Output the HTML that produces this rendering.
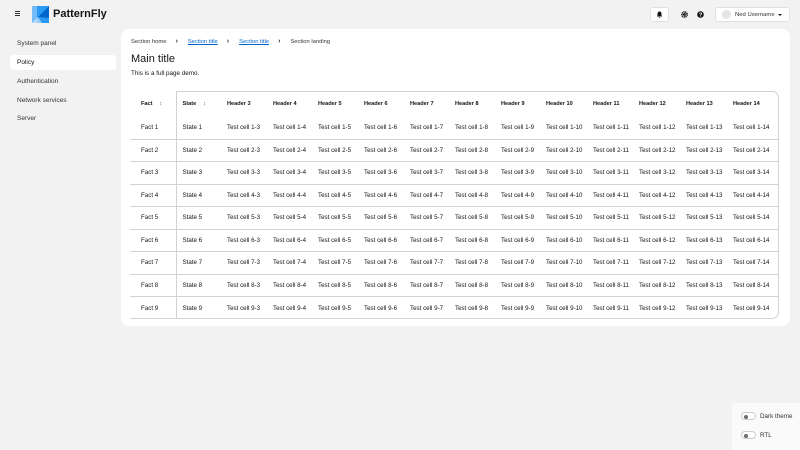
<!DOCTYPE html>
<html><head><meta charset="utf-8"><style>
*{box-sizing:border-box;margin:0;padding:0}
body{width:800px;height:450px;background:#f2f2f2;font-family:"Liberation Sans",sans-serif;color:#151515;position:relative;overflow:hidden;font-size:6.5px}
.abs{position:absolute}
.nav{position:absolute;left:17px;font-size:6.5px;color:#333}
.main{position:absolute;left:121px;top:29px;width:669px;height:297px;background:#fff;border-radius:8px}
.tw{position:absolute;left:130px;top:91px;width:649px;height:228px;border-top:1px solid #d2d2d2;border-right:1px solid #d2d2d2;border-bottom:1px solid #d2d2d2;border-radius:0 7px 7px 0;overflow:hidden}
table{border-collapse:collapse;table-layout:fixed;width:648px;position:absolute;left:0;top:0}
td,th{padding-left:6px;text-align:left;white-space:nowrap;font-size:6.2px;font-weight:normal;color:#151515}
th{height:24.5px;font-weight:bold;font-size:5.6px}
td{height:22.5px;border-bottom:1px solid #d2d2d2}
tr:last-child td{border-bottom:none}
td:first-child,th:first-child{padding-left:11px;border-right:1px solid #d2d2d2}
.s{color:#555;margin-left:7px;font-weight:normal}
.cover{position:absolute;left:130px;top:90px;width:46px;height:2px;background:#fff}
.tog{position:absolute;left:741px;width:15px;height:8px;border:1px solid #ccc;border-radius:5px;background:#fff}
.tog:after{content:"";position:absolute;left:2px;top:1.5px;width:4px;height:4px;border-radius:50%;background:#6a6e73}
.ch{display:inline-block;margin:0 10px 0 9px;font-weight:bold;font-size:7px}
</style></head><body>
<div class="abs" style="left:15px;top:11px;width:5px;height:1px;background:#333;box-shadow:0 2px #333,0 4px #333"></div>
<svg class="abs" style="left:32px;top:6px" width="17" height="17" viewBox="0 0 17 17"><rect width="17" height="17" fill="#73bcf7"/><rect x="5" width="12" height="17" fill="#2b9af3"/><path d="M17 0 L6 11 L17 12Z" fill="#0066cc"/><path d="M0 17 L6 11 L10 17Z" fill="#fff" opacity=".5"/></svg>
<div class="abs" style="left:53px;top:8px;font-size:11px;font-weight:bold">PatternFly</div>
<div class="abs" style="left:650px;top:7px;width:19px;height:15px;background:#fff;border:1px solid #e0e0e0;border-radius:3px"></div>
<svg class="abs" style="left:656px;top:11px" width="7" height="7" viewBox="0 0 7 7"><path d="M3.5 0.5C2 0.5 1.5 1.8 1.5 3V4.5L0.8 5.5H6.2L5.5 4.5V3C5.5 1.8 5 0.5 3.5 0.5Z M2.8 6H4.2V6.8H2.8Z" fill="#151515"/></svg>
<svg class="abs" style="left:681px;top:11px" width="7" height="7" viewBox="0 0 7 7"><circle cx="3.5" cy="3.5" r="2.6" fill="none" stroke="#151515" stroke-width="1.6" stroke-dasharray="1.2 0.6"/><circle cx="3.5" cy="3.5" r="1.4" fill="#151515"/></svg>
<svg class="abs" style="left:697px;top:11px" width="7" height="7" viewBox="0 0 7 7"><circle cx="3.5" cy="3.5" r="3.3" fill="#151515"/><text x="3.5" y="5.5" font-size="5.5" fill="#fff" text-anchor="middle" font-family="Liberation Sans" font-weight="bold">?</text></svg>
<div class="abs" style="left:715px;top:7px;width:75px;height:15px;background:#fff;border:1px solid #e0e0e0;border-radius:3px"></div>
<div class="abs" style="left:722px;top:10px;width:9px;height:9px;border-radius:50%;background:#e5e5e5"></div>
<div class="abs" style="left:735px;top:11.5px;font-size:5.9px;color:#333">Ned Username</div>
<div class="abs" style="left:778px;top:14px;border-left:2px solid transparent;border-right:2px solid transparent;border-top:2.5px solid #151515"></div>
<div class="nav" style="top:40px">System panel</div>
<div class="abs" style="left:10px;top:55px;width:106px;height:15px;background:#fff;border-radius:3px"></div>
<div class="nav" style="top:59px;color:#151515">Policy</div>
<div class="nav" style="top:78px">Authentication</div>
<div class="nav" style="top:97px">Network services</div>
<div class="nav" style="top:115px">Server</div>
<div class="main"></div>
<div class="abs" style="left:131px;top:38px;font-size:5.8px;color:#333;white-space:nowrap">Section home<span class="ch">›</span><span style="color:#06c;text-decoration:underline">Section title</span><span class="ch">›</span><span style="color:#06c;text-decoration:underline">Section title</span><span class="ch">›</span>Section landing</div>
<div class="abs" style="left:131px;top:53px;font-size:11px">Main title</div>
<div class="abs" style="left:131px;top:70px;font-size:6.3px">This is a full page demo.</div>
<div class="tw"><table>
<colgroup><col style="width:46px"><col style="width:45px"><col style="width:46px"><col style="width:45px"><col style="width:46px"><col style="width:46px"><col style="width:45px"><col style="width:46px"><col style="width:45px"><col style="width:47px"><col style="width:46px"><col style="width:47px"><col style="width:47px"><col style="width:51px"></colgroup>
<tr><th>Fact<span class="s">↕</span></th><th>State<span class="s">↕</span></th><th>Header 3</th><th>Header 4</th><th>Header 5</th><th>Header 6</th><th>Header 7</th><th>Header 8</th><th>Header 9</th><th>Header 10</th><th>Header 11</th><th>Header 12</th><th>Header 13</th><th>Header 14</th></tr>
<tr><td>Fact 1</td><td>State 1</td><td>Test cell 1-3</td><td>Test cell 1-4</td><td>Test cell 1-5</td><td>Test cell 1-6</td><td>Test cell 1-7</td><td>Test cell 1-8</td><td>Test cell 1-9</td><td>Test cell 1-10</td><td>Test cell 1-11</td><td>Test cell 1-12</td><td>Test cell 1-13</td><td>Test cell 1-14</td></tr>
<tr><td>Fact 2</td><td>State 2</td><td>Test cell 2-3</td><td>Test cell 2-4</td><td>Test cell 2-5</td><td>Test cell 2-6</td><td>Test cell 2-7</td><td>Test cell 2-8</td><td>Test cell 2-9</td><td>Test cell 2-10</td><td>Test cell 2-11</td><td>Test cell 2-12</td><td>Test cell 2-13</td><td>Test cell 2-14</td></tr>
<tr><td>Fact 3</td><td>State 3</td><td>Test cell 3-3</td><td>Test cell 3-4</td><td>Test cell 3-5</td><td>Test cell 3-6</td><td>Test cell 3-7</td><td>Test cell 3-8</td><td>Test cell 3-9</td><td>Test cell 3-10</td><td>Test cell 3-11</td><td>Test cell 3-12</td><td>Test cell 3-13</td><td>Test cell 3-14</td></tr>
<tr><td>Fact 4</td><td>State 4</td><td>Test cell 4-3</td><td>Test cell 4-4</td><td>Test cell 4-5</td><td>Test cell 4-6</td><td>Test cell 4-7</td><td>Test cell 4-8</td><td>Test cell 4-9</td><td>Test cell 4-10</td><td>Test cell 4-11</td><td>Test cell 4-12</td><td>Test cell 4-13</td><td>Test cell 4-14</td></tr>
<tr><td>Fact 5</td><td>State 5</td><td>Test cell 5-3</td><td>Test cell 5-4</td><td>Test cell 5-5</td><td>Test cell 5-6</td><td>Test cell 5-7</td><td>Test cell 5-8</td><td>Test cell 5-9</td><td>Test cell 5-10</td><td>Test cell 5-11</td><td>Test cell 5-12</td><td>Test cell 5-13</td><td>Test cell 5-14</td></tr>
<tr><td>Fact 6</td><td>State 6</td><td>Test cell 6-3</td><td>Test cell 6-4</td><td>Test cell 6-5</td><td>Test cell 6-6</td><td>Test cell 6-7</td><td>Test cell 6-8</td><td>Test cell 6-9</td><td>Test cell 6-10</td><td>Test cell 6-11</td><td>Test cell 6-12</td><td>Test cell 6-13</td><td>Test cell 6-14</td></tr>
<tr><td>Fact 7</td><td>State 7</td><td>Test cell 7-3</td><td>Test cell 7-4</td><td>Test cell 7-5</td><td>Test cell 7-6</td><td>Test cell 7-7</td><td>Test cell 7-8</td><td>Test cell 7-9</td><td>Test cell 7-10</td><td>Test cell 7-11</td><td>Test cell 7-12</td><td>Test cell 7-13</td><td>Test cell 7-14</td></tr>
<tr><td>Fact 8</td><td>State 8</td><td>Test cell 8-3</td><td>Test cell 8-4</td><td>Test cell 8-5</td><td>Test cell 8-6</td><td>Test cell 8-7</td><td>Test cell 8-8</td><td>Test cell 8-9</td><td>Test cell 8-10</td><td>Test cell 8-11</td><td>Test cell 8-12</td><td>Test cell 8-13</td><td>Test cell 8-14</td></tr>
<tr><td>Fact 9</td><td>State 9</td><td>Test cell 9-3</td><td>Test cell 9-4</td><td>Test cell 9-5</td><td>Test cell 9-6</td><td>Test cell 9-7</td><td>Test cell 9-8</td><td>Test cell 9-9</td><td>Test cell 9-10</td><td>Test cell 9-11</td><td>Test cell 9-12</td><td>Test cell 9-13</td><td>Test cell 9-14</td></tr>
</table></div>
<div class="cover"></div>
<div class="abs" style="left:732px;top:403px;width:68px;height:47px;background:#fafafa"></div>
<div class="tog" style="top:412px"></div>
<div class="abs" style="left:760px;top:413px;font-size:6.3px;color:#333">Dark theme</div>
<div class="tog" style="top:431px"></div>
<div class="abs" style="left:760px;top:432px;font-size:6.3px;color:#333">RTL</div>
</body></html>
